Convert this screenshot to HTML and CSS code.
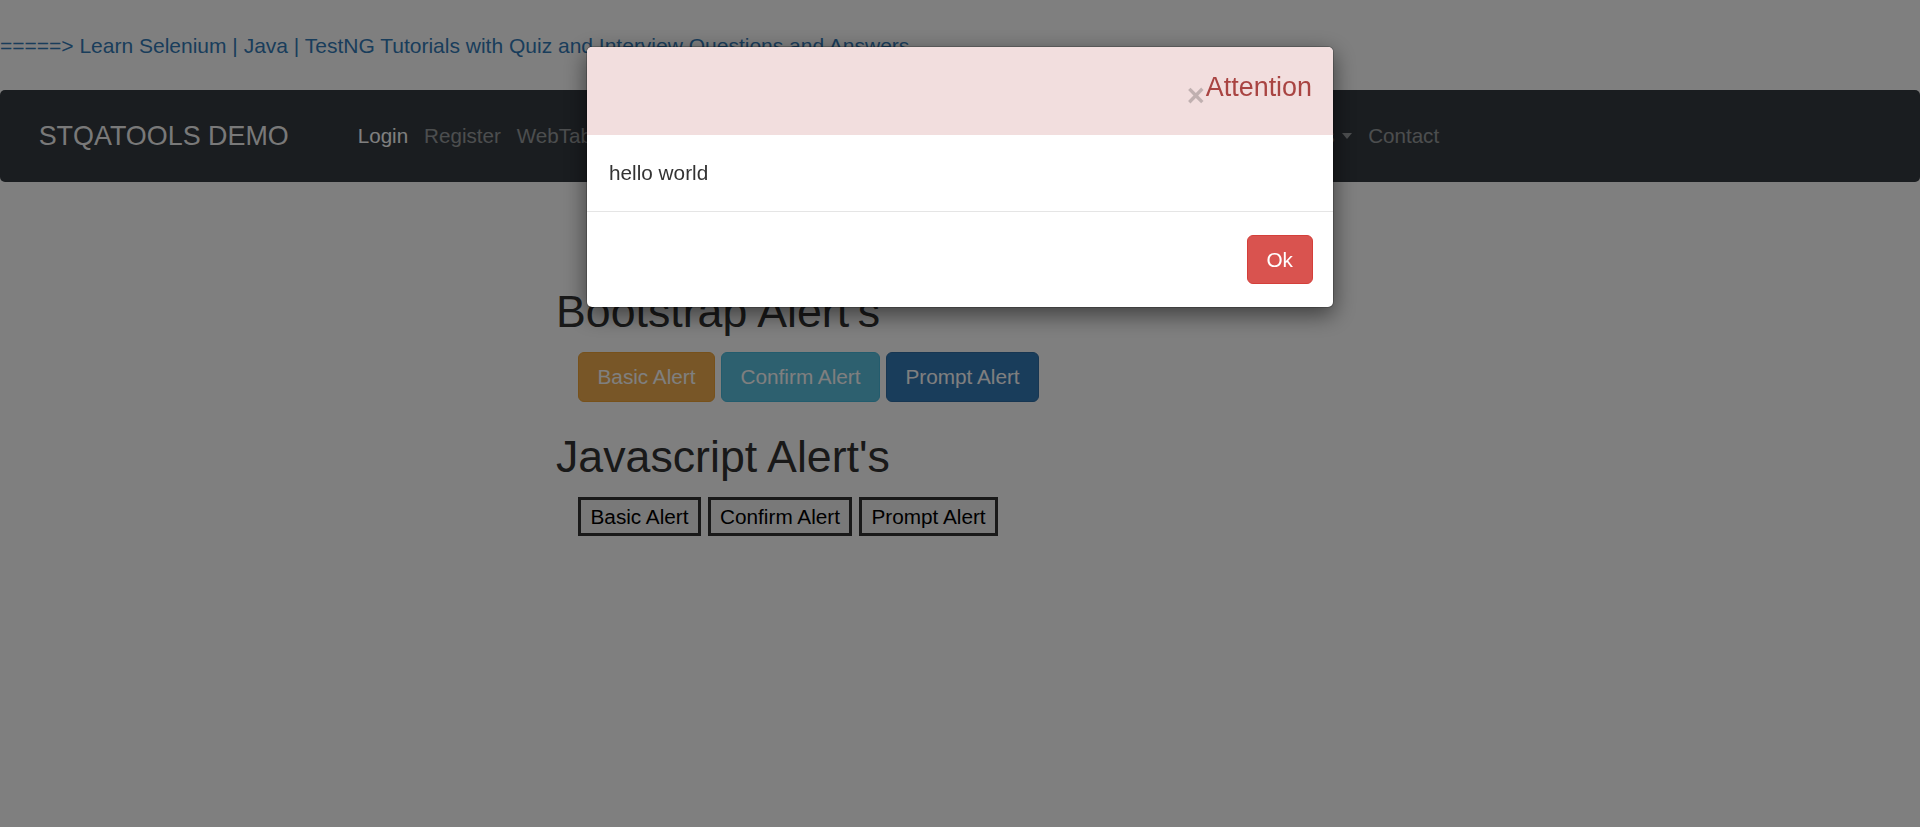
FILE: index.html
```html
<!DOCTYPE html>
<html lang="en">
<head>
<meta charset="utf-8">
<title>STQATOOLS DEMO - Alerts</title>
<link rel="stylesheet" href="styles.css">
</head>
<body>
<div class="topbar">
  <a class="top-link" href="#">=====&gt; Learn Selenium | Java | TestNG Tutorials with Quiz and Interview Questions and Answers</a>
</div>
<nav class="navbar">
  <a class="brand" href="#">STQATOOLS DEMO</a>
  <ul class="nav">
    <li><a class="nav-link active" href="#">Login</a></li>
    <li><a class="nav-link" href="#">Register</a></li>
    <li><a class="nav-link" href="#">WebTables</a></li>
    <li><a class="nav-link" href="#">Frames</a></li>
    <li><a class="nav-link" href="#">Windows</a></li>
    <li><a class="nav-link" href="#">Alerts</a></li>
    <li><a class="nav-link" href="#">Widgets</a></li>
    <li><a class="nav-link" href="#">Interactions</a></li>
    <li><a class="nav-link" href="#">Tooltips</a></li>
    <li><a class="nav-link dropdown-toggle" href="#">Other Examples<span class="caret"></span></a></li>
    <li><a class="nav-link" href="#">Contact</a></li>
  </ul>
</nav>
<main class="content">
  <h2 class="title">Bootstrap Alert's</h2>
  <div class="btn-row">
    <button class="btn btn-warning">Basic Alert</button>
    <button class="btn btn-info">Confirm Alert</button>
    <button class="btn btn-primary">Prompt Alert</button>
  </div>
  <h2 class="title title-js">Javascript Alert's</h2>
  <div class="btn-row js-row">
    <button class="js-btn">Basic Alert</button>
    <button class="js-btn">Confirm Alert</button>
    <button class="js-btn">Prompt Alert</button>
  </div>
</main>
<div class="backdrop"></div>
<div class="modal">
  <div class="modal-dialog">
    <div class="modal-header">
      <button class="close" type="button">&times;</button>
      <h4 class="modal-title">Attention</h4>
    </div>
    <div class="modal-body">hello world</div>
    <div class="modal-footer">
      <button class="btn btn-danger" type="button">Ok</button>
    </div>
  </div>
</div>
</body>
</html>
```
FILE: styles.css
```css
html, body {
  margin: 0;
  padding: 0;
}
body {
  font-family: "Liberation Sans", Arial, Helvetica, sans-serif;
  font-size: 20.75px;
  line-height: 1.42857;
  color: #333;
  background: #fff;
}

.topbar {
  padding-top: 31px;
  margin-bottom: 29px;
  height: 30px;
}
.top-link {
  font-size: 21px;
  line-height: 29.7px;
  color: #337ab7;
  text-decoration: none;
  white-space: nowrap;
}

.navbar {
  height: 92px;
  box-sizing: border-box;
  background: #343a40;
  border-radius: 5px;
  display: flex;
  align-items: center;
  padding-left: 38.7px;
}
.brand {
  font-size: 26.9px;
  line-height: 1.5;
  color: rgba(255, 255, 255, 0.95);
  text-decoration: none;
  margin-right: 61px;
  white-space: nowrap;
}
.nav {
  list-style: none;
  margin: 0;
  padding: 0;
  display: flex;
  align-items: center;
}
.nav-link {
  display: flex;
  align-items: center;
  padding: 0 8px;
  font-size: 20.6px;
  color: rgba(255, 255, 255, 0.5);
  text-decoration: none;
  white-space: nowrap;
}
.nav-link.active {
  color: #fff;
}
.caret {
  display: inline-block;
  width: 0;
  height: 0;
  margin-left: 7.5px;
  border-top: 6px solid rgba(255, 255, 255, 0.5);
  border-left: 5.5px solid transparent;
  border-right: 5.5px solid transparent;
}

.content {
  width: 808px;
  margin: 0 auto;
  padding-top: 105px;
}
.title {
  font-size: 44.7px;
  line-height: 1.1;
  font-weight: 500;
  margin: 0 0 16px;
  color: #333;
}
.title-js {
  margin-top: 30.5px;
  margin-bottom: 16px;
}
.btn-row {
  display: flex;
  gap: 6px;
  margin-left: 22px;
}
.js-row {
  gap: 6.5px;
}
.btn {
  font-family: inherit;
  font-size: 20.75px;
  line-height: 29.4px;
  padding: 9px 18.5px;
  border: 1px solid transparent;
  border-radius: 6px;
  color: #fff;
  cursor: pointer;
}
.btn-warning { background: #f0ad4e; border-color: #eea236; }
.btn-info { background: #5bc0de; border-color: #46b8da; }
.btn-primary { background: #337ab7; border-color: #2e6da4; }
.btn-danger { background: #d9534f; border-color: #d43f3a; }

.js-btn {
  font-family: inherit;
  font-size: 20.75px;
  line-height: 29.4px;
  padding: 1.5px 9.5px;
  border: 3px solid #333;
  border-radius: 0;
  background: #f3f3f3;
  color: #000;
}

.backdrop {
  position: fixed;
  inset: 0;
  background: rgba(0, 0, 0, 0.5);
}
.modal {
  position: fixed;
  inset: 0;
  display: flex;
  justify-content: center;
  align-items: flex-start;
  padding-top: 46px;
  box-sizing: border-box;
}
.modal-dialog {
  width: 748px;
  box-sizing: border-box;
  background: #fff;
  background-clip: padding-box;
  border: 1px solid rgba(0, 0, 0, 0.2);
  border-radius: 6px;
  box-shadow: 0 7px 22px rgba(0, 0, 0, 0.5);
  overflow: hidden;
}
.modal-header {
  background: #f2dede;
  display: flex;
  justify-content: flex-end;
  align-items: flex-start;
  padding: 26px 21px 32.85px;
}
.modal-title {
  margin: 0;
  font-size: 26.9px;
  line-height: 1.1;
  font-weight: 500;
  color: #a94442;
}
.close {
  font-family: "Liberation Sans", Arial, sans-serif;
  font-size: 31px;
  font-weight: bold;
  line-height: 1;
  color: #000;
  opacity: 0.2;
  background: none;
  border: 0;
  padding: 0;
  margin: 7px 1px -12px 0;
}
.modal-body {
  padding: 23px 22px 22.6px;
  color: #333;
}
.modal-footer {
  border-top: 1px solid #e5e5e5;
  padding: 23px 20.5px 23px;
  display: flex;
  justify-content: flex-end;
}
```
